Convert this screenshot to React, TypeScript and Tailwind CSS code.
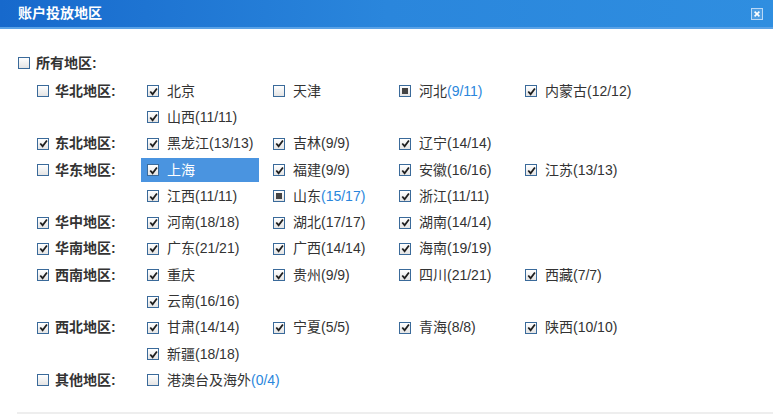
import React from "react";

type State = "on" | "off" | "part";

interface Province {
  name: string;
  count?: string;
  state: State;
  active?: boolean;
}

interface Region {
  name: string;
  state: State;
  provinces: Province[];
}

const regions: Region[] = [
  {
    name: "华北地区",
    state: "off",
    provinces: [
      { name: "北京", state: "on" },
      { name: "天津", state: "off" },
      { name: "河北", count: "(9/11)", state: "part" },
      { name: "内蒙古", count: "(12/12)", state: "on" },
      { name: "山西", count: "(11/11)", state: "on" },
    ],
  },
  {
    name: "东北地区",
    state: "on",
    provinces: [
      { name: "黑龙江", count: "(13/13)", state: "on" },
      { name: "吉林", count: "(9/9)", state: "on" },
      { name: "辽宁", count: "(14/14)", state: "on" },
    ],
  },
  {
    name: "华东地区",
    state: "off",
    provinces: [
      { name: "上海", state: "on", active: true },
      { name: "福建", count: "(9/9)", state: "on" },
      { name: "安徽", count: "(16/16)", state: "on" },
      { name: "江苏", count: "(13/13)", state: "on" },
      { name: "江西", count: "(11/11)", state: "on" },
      { name: "山东", count: "(15/17)", state: "part" },
      { name: "浙江", count: "(11/11)", state: "on" },
    ],
  },
  {
    name: "华中地区",
    state: "on",
    provinces: [
      { name: "河南", count: "(18/18)", state: "on" },
      { name: "湖北", count: "(17/17)", state: "on" },
      { name: "湖南", count: "(14/14)", state: "on" },
    ],
  },
  {
    name: "华南地区",
    state: "on",
    provinces: [
      { name: "广东", count: "(21/21)", state: "on" },
      { name: "广西", count: "(14/14)", state: "on" },
      { name: "海南", count: "(19/19)", state: "on" },
    ],
  },
  {
    name: "西南地区",
    state: "on",
    provinces: [
      { name: "重庆", state: "on" },
      { name: "贵州", count: "(9/9)", state: "on" },
      { name: "四川", count: "(21/21)", state: "on" },
      { name: "西藏", count: "(7/7)", state: "on" },
      { name: "云南", count: "(16/16)", state: "on" },
    ],
  },
  {
    name: "西北地区",
    state: "on",
    provinces: [
      { name: "甘肃", count: "(14/14)", state: "on" },
      { name: "宁夏", count: "(5/5)", state: "on" },
      { name: "青海", count: "(8/8)", state: "on" },
      { name: "陕西", count: "(10/10)", state: "on" },
      { name: "新疆", count: "(18/18)", state: "on" },
    ],
  },
  {
    name: "其他地区",
    state: "off",
    provinces: [{ name: "港澳台及海外", count: "(0/4)", state: "off" }],
  },
];

const Box: React.FC<{ state: State }> = ({ state }) => (
  <span className="relative inline-flex h-[12px] w-[12px] shrink-0 items-center justify-center border border-[#3a6a9a] bg-gradient-to-b from-white to-[#e4e4e4]">
    {state === "on" && (
      <svg viewBox="0 0 10 10" className="h-[9px] w-[9px]">
        <path d="M1.4 5 L4 8 L8.8 1.6" fill="none" stroke="#1f1f1f" strokeWidth="2" />
      </svg>
    )}
    {state === "part" && <span className="h-[6px] w-[6px] bg-[#444]" />}
  </span>
);

const App: React.FC = () => {
  return (
    <div
      className="h-[419px] w-[773px] overflow-hidden bg-white text-[14px] text-[#333]"
      style={{ fontFamily: '"Liberation Sans", "Noto Sans CJK SC", sans-serif' }}
    >
      {/* header */}
      <div className="flex h-[29px] items-center justify-between border-b-2 border-[#5aa2e6] bg-gradient-to-r from-[#1769cc] via-[#2a86dc] to-[#2f8ee0] pl-[18px] pr-[10px]">
        <span className="text-[14px] font-bold text-white">账户投放地区</span>
        <span className="flex h-[12px] w-[12px] items-center justify-center border border-[#b9d8f6] bg-white/15">
          <svg viewBox="0 0 10 10" className="h-[8px] w-[8px]">
            <path d="M2 2 L8 8 M8 2 L2 8" stroke="white" strokeWidth="2" />
          </svg>
        </span>
      </div>

      <div className="pl-[18px] pt-[21px]">
        <div className="mb-[2px] flex h-[26px] items-center gap-[6px] font-bold">
          <Box state="off" />
          <span>所有地区:</span>
        </div>

        <div className="pl-[19px]">
          {regions.map((r) => (
            <div key={r.name} className="flex">
              <div className="flex h-[26.3px] w-[104px] shrink-0 items-center gap-[6px] font-bold">
                <Box state={r.state} />
                <span>{r.name}:</span>
              </div>
              <div className="grid grid-cols-[126px_126px_126px_126px]">
                {r.provinces.map((p) => (
                  <div key={p.name} className="flex h-[26.3px] items-center">
                    <div
                      className={
                        p.active
                          ? "flex h-[24px] w-[118px] items-center gap-[8px] bg-[#4a94e0] pl-[6px] text-white"
                          : "flex h-[24px] w-[118px] items-center gap-[8px] pl-[6px]"
                      }
                    >
                      <Box state={p.state} />
                      <span className="whitespace-nowrap">
                        {p.name}
                        {p.count && (
                          <span className={p.state === "on" ? "" : "text-[#2a86dc]"}>
                            {p.count}
                          </span>
                        )}
                      </span>
                    </div>
                  </div>
                ))}
              </div>
            </div>
          ))}
        </div>
      </div>

      <div className="ml-[17px] mt-[18px] h-[2px] bg-[#eeeeee]" />
    </div>
  );
};

export default App;
